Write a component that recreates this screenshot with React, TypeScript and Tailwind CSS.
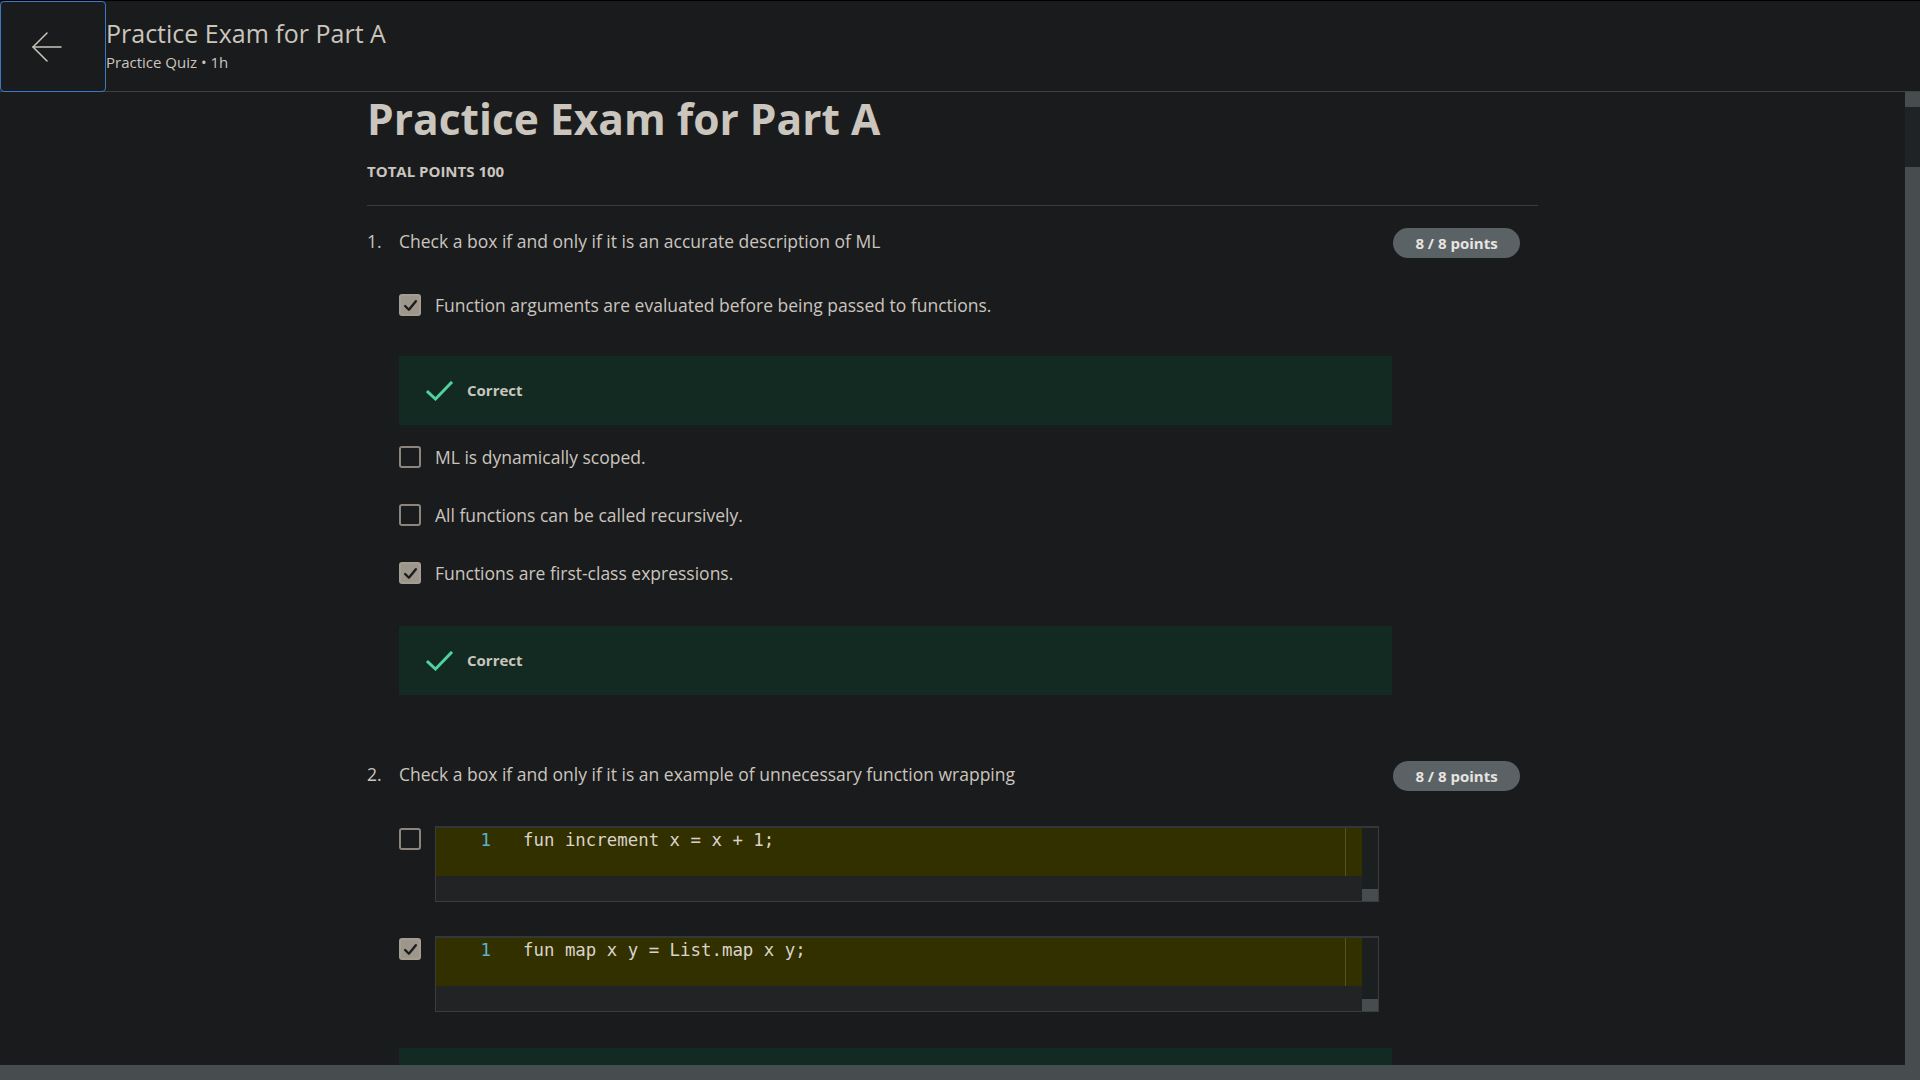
import React from "react";

type Option = { text: string; checked: boolean; correct?: boolean };

const q1Options: Option[] = [
  { text: "Function arguments are evaluated before being passed to functions.", checked: true, correct: true },
  { text: "ML is dynamically scoped.", checked: false },
  { text: "All functions can be called recursively.", checked: false },
  { text: "Functions are first-class expressions.", checked: true, correct: true },
];

function Checkbox({ checked }: { checked: boolean }) {
  if (checked) {
    return (
      <div className="flex h-[22px] w-[22px] shrink-0 items-center justify-center rounded-[3px] border-2 border-[#a59d91] bg-[#9d968b]">
        <svg width="15" height="15" viewBox="0 0 14 14" fill="none" stroke="#1b1c1e" strokeWidth="2.2" strokeLinecap="round" strokeLinejoin="round">
          <path d="M2 7.5 5.5 11 12 3" />
        </svg>
      </div>
    );
  }
  return <div className="h-[22px] w-[22px] shrink-0 rounded-[3px] border-2 border-[#8c857b]" />;
}

function CorrectBox() {
  return (
    <div className="flex h-[69px] items-center bg-[#132a23] pl-[27px]">
      <svg width="27" height="20" viewBox="0 0 27 20" fill="none" stroke="#4fd1a0" strokeWidth="3" strokeLinecap="square">
        <path d="M2 11 9.5 18 25 2" />
      </svg>
      <span className="ml-[14px] text-[15px] font-bold text-[#cac5bd]">Correct</span>
    </div>
  );
}

function Badge() {
  return (
    <div className="mr-[18px] flex h-[30px] w-[127px] shrink-0 items-center justify-center rounded-full bg-[#5a6266] text-[15px] font-bold text-[#e6e4e0]">
      8 / 8 points
    </div>
  );
}

function QuestionHeader({ n, text }: { n: number; text: string }) {
  return (
    <div className="flex items-start justify-between">
      <div className="flex text-[17.5px] leading-[26px] text-[#cac5bd]">
        <span className="w-[32px]">{n}.</span>
        <span>{text}</span>
      </div>
      <Badge />
    </div>
  );
}

function CodeEditor({ code }: { code: string }) {
  return (
    <div className="flex h-[76px] w-[944px] flex-col border border-[#3a3d40] border-t-2 border-t-[#34373a] bg-[#1e2123]">
      <div className="flex h-[48px]">
        <div className="flex flex-1 bg-[#333000]">
          <div className="flex flex-1" style={{ fontFamily: "'DejaVu Sans Mono', 'Liberation Mono', monospace" }}>
            <span className="w-[55px] text-right text-[17.4px] leading-[24px] text-[#5ab0d8]">1</span>
            <span className="ml-[32px] whitespace-pre text-[17.4px] leading-[24px] text-[#d9d4cb]">{code}</span>
          </div>
          <div className="w-[17px] border-l border-[#57531c]" />
        </div>
        <div className="w-[16px] bg-[#1c1f20]" />
      </div>
      <div className="flex flex-1">
        <div className="flex-1 bg-[#212325]" />
        <div className="flex w-[16px] flex-col bg-[#1c1f20]">
          <div className="flex-1" />
          <div className="h-[12px] bg-[#474c4f]" />
        </div>
      </div>
    </div>
  );
}

export default function App() {
  return (
    <div
      className="flex h-screen w-screen flex-col overflow-hidden bg-[#1a1b1d] text-[#cac5bd]"
      style={{ fontFamily: "'Open Sans', 'Noto Sans', sans-serif" }}
    >
      <header className="flex h-[92px] shrink-0 border-b border-[#3d3f42] border-t border-t-black">
        <button className="flex h-[91px] w-[106px] items-center justify-start rounded-[4px] border border-[#3b78c8] pl-[31px]">
          <svg width="30" height="30" viewBox="0 0 30 30" fill="none" stroke="#c9c5bd" strokeWidth="1.5" strokeLinecap="round" strokeLinejoin="round">
            <path d="M29 15H1" />
            <path d="M15 1 1 15l14 14" />
          </svg>
        </button>
        <div className="pt-[17px]">
          <div className="text-[25px] leading-[30px] text-[#cac5bd]">Practice Exam for Part A</div>
          <div className="mt-[4px] text-[15px] leading-[20px] text-[#cac5bd]">Practice Quiz • 1h</div>
        </div>
      </header>

      <div className="flex min-h-0 flex-1">
        <main className="min-w-0 flex-1 overflow-hidden">
          <div className="ml-[367px] w-[1171px]">
            <h1 className="text-[42.5px] font-bold leading-[54px] text-[#cac5bd]">Practice Exam for Part A</h1>
            <div className="mt-[15px] text-[15px] font-bold leading-[20px] text-[#cac5bd]">TOTAL POINTS 100</div>
            <div className="mt-[24px] border-t border-[#3a3c3f]" />

            <div className="mt-[22px]">
              <QuestionHeader n={1} text="Check a box if and only if it is an accurate description of ML" />
              <div className="ml-[32px] mt-[18px] w-[993px]">
                {q1Options.map((o, i) => (
                  <div key={i} className={i === 1 ? "mt-[3px]" : ""}>
                    <div className="flex h-[58px] items-center">
                      <Checkbox checked={o.checked} />
                      <span className="ml-[14px] text-[17.5px] leading-[26px]">{o.text}</span>
                    </div>
                    {o.correct && (
                      <div className={i === 0 ? "mt-[22px]" : "mt-[24px]"}>
                        <CorrectBox />
                      </div>
                    )}
                  </div>
                ))}
              </div>
            </div>

            <div className="mt-[66px]">
              <QuestionHeader n={2} text="Check a box if and only if it is an example of unnecessary function wrapping" />
              <div className="ml-[32px] mt-[35px] w-[993px]">
                <div className="flex items-start">
                  <div className="mt-[2px]">
                    <Checkbox checked={false} />
                  </div>
                  <div className="ml-[14px]">
                    <CodeEditor code="fun increment x = x + 1;" />
                  </div>
                </div>
                <div className="mt-[34px] flex items-start">
                  <div className="mt-[2px]">
                    <Checkbox checked={true} />
                  </div>
                  <div className="ml-[14px]">
                    <CodeEditor code="fun map x y = List.map x y;" />
                  </div>
                </div>
                <div className="mt-[36px] h-[69px] bg-[#132a23]" />
              </div>
            </div>
          </div>
        </main>
        <div className="flex w-[15px] shrink-0 flex-col">
          <div className="h-[15px] bg-[#474c4f]" />
          <div className="h-[60px] bg-[#1f2325]" />
          <div className="flex-1 bg-[#474c4f]" />
        </div>
      </div>
      <div className="h-[15px] shrink-0 bg-[#474c4f]" />
    </div>
  );
}
